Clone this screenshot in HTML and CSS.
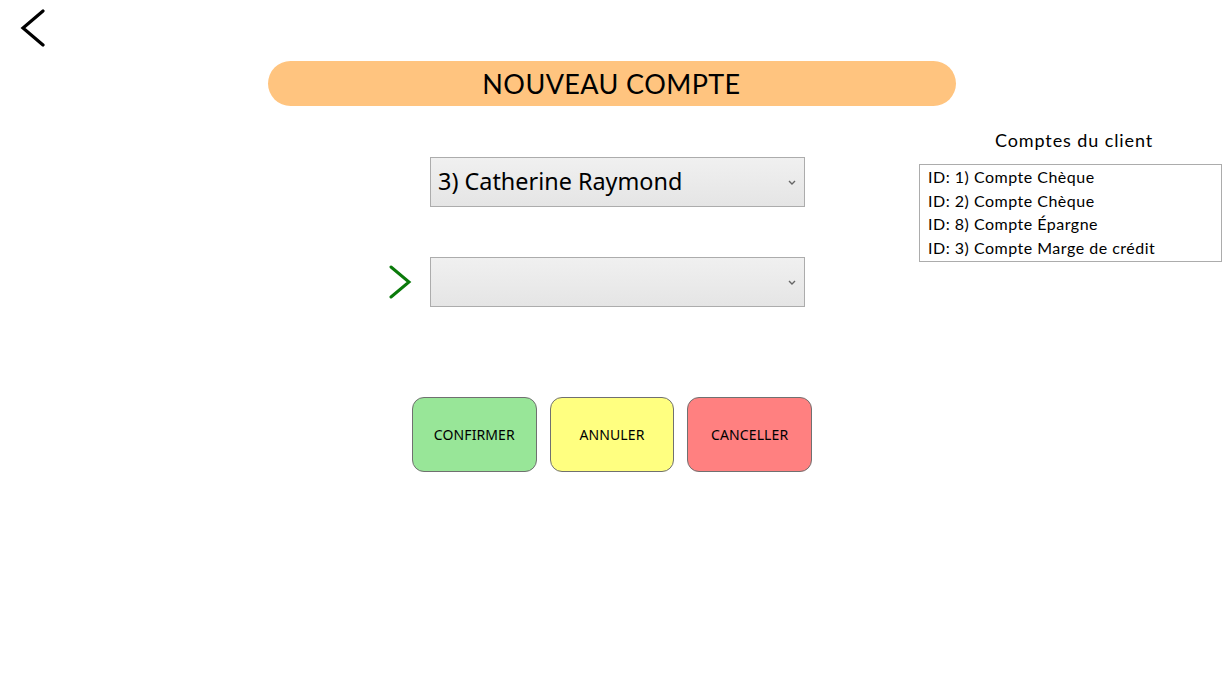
FILE: index.html
```html
<!DOCTYPE html>
<html lang="fr">
<head>
<meta charset="utf-8">
<title>Nouveau compte</title>
<link rel="stylesheet" href="styles.css">
</head>
<body>
<div class="back-row">
  <svg class="back" width="30" height="40" viewBox="0 0 30 40"><polyline points="25,2 5,19 25,36" fill="none" stroke="#000" stroke-width="3.2" stroke-linecap="round" stroke-linejoin="miter"/></svg>
</div>
<div class="header">NOUVEAU COMPTE</div>
<div class="content">
  <div class="center">
    <div class="combo-row first">
      <div class="slot"></div>
      <div class="combo"><span class="combo-text">3) Catherine Raymond</span>
        <svg class="chev" width="8" height="5" viewBox="0 0 8 5"><polyline points="1,1 4,4 7,1" fill="none" stroke="#666" stroke-width="1.4"/></svg>
      </div>
    </div>
    <div class="combo-row second">
      <div class="slot"><svg class="go" width="24" height="34" viewBox="0 0 24 34"><polyline points="3,2 21,17 3,32" fill="none" stroke="#0a7a0a" stroke-width="3" stroke-linecap="round"/></svg></div>
      <div class="combo"><span class="combo-text"></span>
        <svg class="chev" width="8" height="5" viewBox="0 0 8 5"><polyline points="1,1 4,4 7,1" fill="none" stroke="#666" stroke-width="1.4"/></svg>
      </div>
    </div>
    <div class="buttons">
      <button class="btn btn-green">CONFIRMER</button>
      <button class="btn btn-yellow">ANNULER</button>
      <button class="btn btn-red">CANCELLER</button>
    </div>
  </div>
  <div class="side">
    <div class="side-title">Comptes du client</div>
    <ul class="list">
      <li>ID: 1) Compte Chèque</li>
      <li>ID: 2) Compte Chèque</li>
      <li>ID: 8) Compte Épargne</li>
      <li>ID: 3) Compte Marge de crédit</li>
    </ul>
  </div>
</div>
</body>
</html>
```

FILE: styles.css
```css
html, body {
  margin: 0;
  padding: 0;
  background: #fff;
}
body {
  width: 1223px;
  height: 693px;
  overflow: hidden;
  font-family: "Noto Sans", "Open Sans", sans-serif;
  color: #000;
}
.back-row {
  height: 61px;
  box-sizing: border-box;
  padding: 9px 0 0 18px;
}
.back {
  display: block;
}
.header {
  width: 688px;
  height: 45px;
  margin: 0 auto;
  background: #ffc47f;
  border-radius: 23px;
  font-family: "Lato", "DejaVu Sans", sans-serif;
  font-size: 27px;
  line-height: 45px;
  text-align: center;
  letter-spacing: 0.4px;
}
.content {
  display: flex;
  align-items: flex-start;
}
.center {
  margin-left: 388px;
  width: 424px;
}
.combo-row {
  display: flex;
  align-items: center;
}
.combo-row.first {
  margin-top: 51px;
}
.combo-row.second {
  margin-top: 50px;
}
.slot {
  width: 42px;
  height: 50px;
  display: flex;
  align-items: center;
}
.go {
  display: block;
}
.combo {
  width: 375px;
  height: 50px;
  box-sizing: border-box;
  border: 1px solid #acacac;
  background: linear-gradient(#f0f0f0, #e5e5e5);
  display: flex;
  align-items: center;
  justify-content: space-between;
  padding: 0 8px 3px 7px;
}
.combo-text {
  font-size: 23.4px;
}
.chev {
  display: block;
  margin-top: 3px;
}
.buttons {
  display: flex;
  gap: 13px;
  margin-top: 90px;
  padding-left: 24px;
}
.btn {
  width: 125px;
  height: 75px;
  border: 1px solid #707070;
  border-radius: 12px;
  font-family: "Noto Sans", "Open Sans", sans-serif;
  font-size: 14px;
  letter-spacing: 0.1px;
  color: #000;
  padding: 0;
}
.btn-green { background: #98e698; }
.btn-yellow { background: #ffff80; }
.btn-red { background: #ff8080; }
.side {
  margin-left: 107px;
  width: 303px;
}
.side-title {
  margin-top: 23px;
  padding-left: 7px;
  font-family: "Lato", "DejaVu Sans", sans-serif;
  font-size: 18px;
  letter-spacing: 0.9px;
  line-height: 22px;
  text-align: center;
}
.list {
  list-style: none;
  margin: 13px 0 0 0;
  padding: 0 0 0 8px;
  height: 98px;
  box-sizing: border-box;
  border: 1px solid #acacac;
  font-family: "Lato", "DejaVu Sans", sans-serif;
  font-size: 16px;
  letter-spacing: 0.5px;
}
.list li {
  line-height: 23.5px;
}
```
